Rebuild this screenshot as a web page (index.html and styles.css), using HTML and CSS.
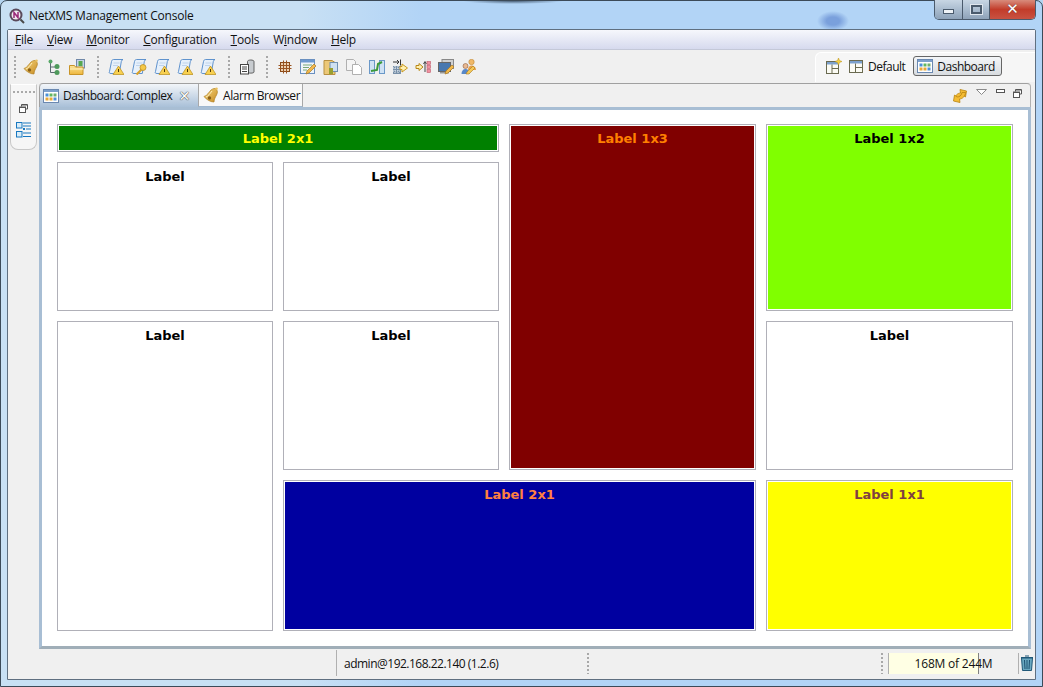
FILE: index.html
```html
<!DOCTYPE html>
<html lang="en">
<head>
<meta charset="utf-8">
<title>NetXMS Management Console</title>
<link rel="stylesheet" href="styles.css">
</head>
<body>
<svg class="defs" width="0" height="0" aria-hidden="true">
  <defs>
    <linearGradient id="gold" x1="0" y1="0" x2="1" y2="1">
      <stop offset="0" stop-color="#f6d67c"/>
      <stop offset="1" stop-color="#c88c24"/>
    </linearGradient>
    <linearGradient id="folderg" x1="0" y1="0" x2="0" y2="1">
      <stop offset="0" stop-color="#fbe49a"/>
      <stop offset="1" stop-color="#eeb63c"/>
    </linearGradient>
    <symbol id="bell" viewBox="0 0 16 16">
      <path d="M1 9.500C4 9 6 5 8 3c2-1.500 4-2 5-1 2 2 1.500 4 .5 6-1 2-2.500 4-2.500 7-3 0-7.500-2-10-5.500z" fill="url(#gold)" stroke="#b08020" stroke-width=".7"/>
      <path d="M3 10C5 9.500 7 6.500 9 4" fill="none" stroke="#fff0c0" stroke-width="1"/>
      <circle cx="6.500" cy="11" r="1.700" fill="#8a6018"/>
      <circle cx="13.500" cy="1.800" r="1.300" fill="#e8c060"/>
    </symbol>
    <symbol id="tree" viewBox="0 0 16 16">
      <path d="M4.500 3v10.500H9M4.500 8H9" fill="none" stroke="#5a6a70" stroke-width="1"/>
      <circle cx="4.500" cy="2.500" r="2" fill="#58a868"/>
      <circle cx="11" cy="7.500" r="2.500" fill="#4f9a5c"/>
      <circle cx="11" cy="13.500" r="2.500" fill="#4f9a5c"/>
    </symbol>
    <symbol id="folderpic" viewBox="0 0 16 16">
      <rect x="7.500" y="0.500" width="8" height="8.500" fill="#c4d4e8" stroke="#7088a8"/>
      <rect x="9.500" y="2" width="4" height="5" fill="#58a850"/>
      <path d="M.5 6.500h5l1 1.500h7.500v7.500H.5z" fill="url(#folderg)" stroke="#c89428"/>
      <path d="M1 10h13" stroke="#fff2c0"/>
    </symbol>
    <symbol id="scroll" viewBox="0 0 16 16">
      <path d="M3 14.500C1.500 14.500.5 13.500 1.500 12.500L3.500 2.500C3.700 1.300 4.500.5 5.500.5H15c-1 .3-1.500 1-1.700 2l-2 12z" fill="#e6f0fb" stroke="#5088c8" stroke-width=".9"/>
      <path d="M5.500 4h6M5 6.500h5" stroke="#b4cce8" stroke-width=".8"/>
      <path d="M10.500 7l5.500 8.500H5z" fill="#f8d050" stroke="#b88c18" stroke-width=".7"/>
      <path d="M10.500 10v3" stroke="#503808" stroke-width="1"/>
    </symbol>
    <symbol id="scrollkey" viewBox="0 0 16 16">
      <path d="M3 14.500C1.500 14.500.5 13.500 1.500 12.500L3.500 2.500C3.700 1.300 4.500.5 5.500.5H15c-1 .3-1.500 1-1.700 2l-2 12z" fill="#e6f0fb" stroke="#5088c8" stroke-width=".9"/>
      <path d="M5.500 4h6M5 6.500h5" stroke="#b4cce8" stroke-width=".8"/>
      <path d="M5.500 15.500l5.500-5.500" stroke="#d8a028" stroke-width="2.200"/>
      <circle cx="12" cy="8.500" r="3" fill="#f4c848" stroke="#b88818" stroke-width=".7"/>
    </symbol>
    <symbol id="server" viewBox="0 0 16 16">
      <path d="M8.500 2.500c0-2 6.500-2 6.500 0V13c0 1.500-6.500 1.500-6.500 0z" fill="#c8ccd0" stroke="#555" stroke-width=".9"/>
      <rect x="1.500" y="5.500" width="8" height="9.500" fill="#fff" stroke="#444"/>
      <path d="M3 8h5M3 10h5M3 12.500h5" stroke="#444"/>
    </symbol>
    <symbol id="gridicon" viewBox="0 0 16 16">
      <rect x="3.500" y="3.500" width="9" height="9" fill="#ecd0b0" stroke="#8a4a18"/>
      <path d="M6.500 1.500v13M9.500 1.500v13M1.500 6.500h13M1.500 9.500h13" stroke="#9a5420" stroke-width="1"/>
    </symbol>
    <symbol id="editor" viewBox="0 0 16 16">
      <rect x=".5" y=".5" width="14" height="14" fill="#eef4fb" stroke="#6a90c0"/>
      <path d="M1 1h13v2.500H1z" fill="#6a98d0"/>
      <path d="M3 6h9M3 8.500h6M3 11h4" stroke="#78a878"/>
      <path d="M6 15l1-3 7-7 2 2-7 7z" fill="#f2b84c" stroke="#a87820" stroke-width=".7"/>
    </symbol>
    <symbol id="folderdoc" viewBox="0 0 16 16">
      <path d="M1 1.500h8l3 2v12H1z" fill="#ecc878" stroke="#b89040"/>
      <rect x="7" y="3.500" width="7.500" height="9" fill="#cfe0f0" stroke="#7090b0"/>
      <rect x="6" y="9" width="4" height="6" fill="#98a030"/>
    </symbol>
    <symbol id="copy" viewBox="0 0 16 16">
      <path d="M.5.500h7l2 2v9h-9z" fill="#f4f4f4" stroke="#b0b0b0"/>
      <path d="M6.500 5.500h6l3 3v7h-9z" fill="#fff" stroke="#b0b0b0"/>
    </symbol>
    <symbol id="chart" viewBox="0 0 16 16">
      <rect x=".5" y="1.500" width="5" height="13" fill="#cfe2f4" stroke="#6a98c8"/>
      <rect x="10.500" y="1.500" width="5" height="13" fill="#cfe2f4" stroke="#6a98c8"/>
      <path d="M2 12l6-1 1-6 4-2" fill="none" stroke="#3c9a3c" stroke-width="2"/>
    </symbol>
    <symbol id="transfer" viewBox="0 0 16 16">
      <path d="M1 3h6M5 1l2 2-2 2" fill="none" stroke="#333"/>
      <path d="M8.500 .5v6" stroke="#333"/>
      <rect x="1" y="7" width="8" height="8" fill="#7890a8"/>
      <path d="M1 9h8M1 12h8M3 7v8M6 7v8" stroke="#e8eef4" stroke-dasharray="1 1"/>
      <path d="M10 5l5.500 4-5.500 4v-2.500H8v-3h2z" fill="#fff0b0" stroke="#c89820"/>
    </symbol>
    <symbol id="flow" viewBox="0 0 16 16">
      <path d="M1 6.500h3v-2l4 3.500-4 3.500v-2H1z" fill="#fff0b0" stroke="#b88818"/>
      <path d="M10 13V3M8.500 5L10 2.500 11.500 5" fill="none" stroke="#444"/>
      <rect x="12" y="2.500" width="3.500" height="3" fill="#f090a0" stroke="#c05868" stroke-width=".6"/>
      <rect x="12" y="6.500" width="3.500" height="3" fill="#f090a0" stroke="#c05868" stroke-width=".6"/>
      <rect x="12" y="10.500" width="3.500" height="3" fill="#f090a0" stroke="#c05868" stroke-width=".6"/>
    </symbol>
    <symbol id="screens" viewBox="0 0 16 16">
      <rect x="4" y=".5" width="11.500" height="9" fill="#d0d0d0" stroke="#888"/>
      <rect x=".5" y="3.500" width="12" height="9" fill="#4878b0" stroke="#666"/>
      <rect x="2" y="13" width="9" height="1.500" fill="#999"/>
      <path d="M7 15l1-3 6-6 2 2-6 6z" fill="#f2b84c" stroke="#a87820" stroke-width=".7"/>
    </symbol>
    <symbol id="users" viewBox="0 0 16 16">
      <circle cx="10.500" cy="3" r="2.700" fill="#f0b868" stroke="#c08838" stroke-width=".6"/>
      <path d="M7 11c0-3 1.500-4.500 3.500-4.500S15 8 15 11z" fill="#e8a048"/>
      <circle cx="4.500" cy="7" r="2.500" fill="#e8b890" stroke="#906040" stroke-width=".6"/>
      <path d="M.5 15c0-3 1.500-5 4-5s4 2 4 5z" fill="#5888c8"/>
      <path d="M5 15l1-2 6-6 2 2-6 6z" fill="#f4c858" stroke="#a87820" stroke-width=".6"/>
    </symbol>
    <symbol id="dash" viewBox="0 0 16 16">
      <rect x=".5" y="1.500" width="15" height="13" fill="#fff" stroke="#6a88b0"/>
      <path d="M1 2h14v2H1z" fill="#7ca0cc"/>
      <rect x="2.500" y="5.500" width="3" height="3" fill="#4a90d8"/>
      <rect x="6.500" y="5.500" width="3" height="3" fill="#60b860"/>
      <rect x="10.500" y="5.500" width="3" height="3" fill="#70b070"/>
      <rect x="2.500" y="9.500" width="3" height="3" fill="#e8a838"/>
      <rect x="6.500" y="9.500" width="3" height="3" fill="#e8a838"/>
      <rect x="10.500" y="9.500" width="3" height="3" fill="#5090d8"/>
    </symbol>
    <symbol id="layout" viewBox="0 0 16 16">
      <rect x="1.500" y="2.500" width="13" height="12" fill="#fbfbf4" stroke="#6a6a50"/>
      <path d="M2 3h12v2.500H2z" fill="#7ca0cc"/>
      <path d="M7.500 5.500v9M7.500 9.500h7" stroke="#6a6a50"/>
    </symbol>
    <symbol id="layoutnew" viewBox="0 0 16 16">
      <rect x=".5" y="3.500" width="12" height="12" fill="#fbfbf4" stroke="#6a6a50"/>
      <path d="M1 4h11v2.500H1z" fill="#7ca0cc"/>
      <path d="M6 6.500v9M6 10.500h6" stroke="#6a6a50"/>
      <path d="M12.500 0l1 2.500 2.500 1-2.500 1-1 2.500-1-2.500-2.500-1 2.500-1z" fill="#f4d040" stroke="#b89018" stroke-width=".5"/>
    </symbol>
    <symbol id="sync" viewBox="0 0 16 16">
      <path d="M2.500 11.500C2.500 8 5.500 5 8.500 5L8 1.500 14.500 3 13.500 9 11 7C8.500 7 6.500 8.500 6 11.500z" fill="#f4bc34" stroke="#b88410" stroke-width=".8"/>
      <path d="M13.500 4.500C13.500 8 10.500 11 7.500 11L8 14.500 1.500 13 2.500 7 5 9C7.500 9 9.500 7.500 10 4.500z" fill="#f4bc34" stroke="#b88410" stroke-width=".8"/>
    </symbol>
    <symbol id="restore" viewBox="0 0 9 9">
      <path d="M2.500 2.500V.5h6v4.500h-2" fill="#fff" stroke="#555"/>
      <rect x=".5" y="3" width="6" height="5.500" fill="#fff" stroke="#555"/>
      <path d="M1 3.500h5M3 1h5" stroke="#555"/>
    </symbol>
    <symbol id="tri" viewBox="0 0 11 6">
      <path d="M.5.500h10L5.500 5.500z" fill="#fff" stroke="#8a8a8a"/>
    </symbol>
    <symbol id="outline" viewBox="0 0 16 16">
      <rect x=".5" y=".5" width="5.500" height="5.500" fill="#d8ecf8" stroke="#1878c0"/>
      <rect x=".5" y="9.500" width="5.500" height="5.500" fill="#d8ecf8" stroke="#1878c0"/>
      <path d="M7 1h8M7 4h8M10 7h5M7 11h8" stroke="#1878c0" stroke-width="1"/>
      <rect x="7" y="6" width="2" height="2" fill="#1878c0"/>
      <path d="M7 14.500h8" stroke="#1878c0"/>
    </symbol>
    <symbol id="appicon" viewBox="0 0 16 16">
      <circle cx="7" cy="7" r="6.500" fill="#5a4a5c"/>
      <circle cx="7" cy="7" r="4.500" fill="#f0e8f0"/>
      <path d="M5 10V4.500l4 5V4" fill="none" stroke="#9a2878" stroke-width="1.500"/>
      <path d="M11.500 11.500L15 15" stroke="#4a4a4a" stroke-width="2"/>
    </symbol>
    <symbol id="trash" viewBox="0 0 14 16">
      <path d="M1.500 3h11L11.500 15.500h-9z" fill="#6aa8c0" stroke="#205878"/>
      <path d="M1 2.500h12M5 1h4" stroke="#205878" stroke-width="1.200"/>
      <path d="M4.500 5l.5 9M7 5v9M9.500 5l-.5 9" stroke="#1c5070"/>
    </symbol>
  </defs>
</svg>

<div class="window">
  <header class="titlebar">
    <svg class="app-icon"><use href="#appicon"/></svg>
    <span class="title-text">NetXMS Management Console</span>
    <div class="controls">
      <span class="ctl ctl-min"><i></i></span>
      <span class="ctl ctl-max"><i></i></span>
      <span class="ctl ctl-close">✕</span>
    </div>
  </header>

  <div class="client">
    <nav class="menubar">
      <span><u>F</u>ile</span>
      <span><u>V</u>iew</span>
      <span><u>M</u>onitor</span>
      <span><u>C</u>onfiguration</span>
      <span><u>T</u>ools</span>
      <span>W<u>i</u>ndow</span>
      <span><u>H</u>elp</span>
    </nav>

    <div class="toolbar">
      <div class="tools">
        <i class="grip"></i>
        <div class="tool-group tg-first">
          <svg class="ti"><use href="#bell"/></svg>
          <svg class="ti"><use href="#tree"/></svg>
          <svg class="ti"><use href="#folderpic"/></svg>
        </div>
        <i class="grip"></i>
        <div class="tool-group">
          <svg class="ti"><use href="#scroll"/></svg>
          <svg class="ti"><use href="#scrollkey"/></svg>
          <svg class="ti"><use href="#scroll"/></svg>
          <svg class="ti"><use href="#scroll"/></svg>
          <svg class="ti"><use href="#scroll"/></svg>
        </div>
        <i class="grip"></i>
        <div class="tool-group tg-short">
          <svg class="ti"><use href="#server"/></svg>
        </div>
        <i class="grip"></i>
        <div class="tool-group">
          <svg class="ti"><use href="#gridicon"/></svg>
          <svg class="ti"><use href="#editor"/></svg>
          <svg class="ti"><use href="#folderdoc"/></svg>
          <svg class="ti"><use href="#copy"/></svg>
          <svg class="ti"><use href="#chart"/></svg>
          <svg class="ti"><use href="#transfer"/></svg>
          <svg class="ti"><use href="#flow"/></svg>
          <svg class="ti"><use href="#screens"/></svg>
          <svg class="ti"><use href="#users"/></svg>
        </div>
      </div>
      <div class="perspectives">
        <svg class="ti"><use href="#layoutnew"/></svg>
        <span class="persp">
          <svg class="ti"><use href="#layout"/></svg>Default
        </span>
        <span class="persp persp-active">
          <svg class="ti"><use href="#dash"/></svg>Dashboard
        </span>
      </div>
    </div>

    <main class="workbench">
      <aside class="trim">
        <i class="trim-grip"></i>
        <svg class="restore"><use href="#restore"/></svg>
        <svg class="outline"><use href="#outline"/></svg>
      </aside>

      <section class="folder">
        <div class="tabs">
          <div class="tab tab-active">
            <svg class="ti"><use href="#dash"/></svg>
            <span class="tab-label">Dashboard: Complex</span>
            <span class="tab-close">✕</span>
          </div>
          <div class="tab tab-other">
            <svg class="ti"><use href="#bell"/></svg>
            <span class="tab-label">Alarm Browser</span>
          </div>
          <div class="view-actions">
            <svg class="ti"><use href="#sync"/></svg>
            <svg class="menu-tri"><use href="#tri"/></svg>
            <i class="min-btn"></i>
            <svg class="restore"><use href="#restore"/></svg>
          </div>
        </div>

        <div class="dashboard">
          <div class="card c-span2 green"><b>Label 2x1</b></div>
          <div class="card c-tall maroon"><b>Label 1x3</b></div>
          <div class="card c-row2 lime"><b>Label 1x2</b></div>
          <div class="card"><b>Label</b></div>
          <div class="card"><b>Label</b></div>
          <div class="card c-row2"><b>Label</b></div>
          <div class="card"><b>Label</b></div>
          <div class="card"><b>Label</b></div>
          <div class="card c-span2 navy"><b>Label 2x1</b></div>
          <div class="card yellow"><b>Label 1x1</b></div>
        </div>
      </section>
    </main>

    <footer class="statusbar">
      <div class="st-user">admin@192.168.22.140 (1.2.6)</div>
      <i class="grip st-grip"></i>
      <div class="heap">
        <i class="grip heap-grip"></i>
        <div class="heap-bar"><span>168M of 244M</span></div>
        <svg class="trash"><use href="#trash"/></svg>
      </div>
    </footer>
  </div>
</div>
</body>
</html>
```

FILE: styles.css
```css
* { box-sizing: border-box; }

html, body {
  margin: 0;
  height: 100%;
  overflow: hidden;
}

body {
  font-family: "Open Sans", "Noto Sans", "Liberation Sans", sans-serif;
  font-size: 12px;
  letter-spacing: -0.2px;
  color: #111;
  background: #b4d4f0;
}

.defs { position: absolute; }

.window {
  height: 687px;
  display: flex;
  flex-direction: column;
  border: 1px solid #3c4a58;
  border-radius: 7px 7px 0 0;
  padding: 0 6px 6px;
  background:
    radial-gradient(ellipse 16px 10px at 832px 20px, #7aa0dc 0, #7aa0dc 40%, transparent 100%),
    radial-gradient(ellipse 50px 3px at 512px 0, #4a6078 0, transparent 100%),
    linear-gradient(90deg, #c8e0f4 0, #c8e0f4 300px, #b2d4f6 420px, #b2d4f6 100%);
}

/* title bar */
.titlebar {
  height: 28px;
  flex: none;
  display: flex;
  align-items: center;
  position: relative;
}
.app-icon { width: 16px; height: 16px; margin: 2px 4px 0 2px; }
.title-text { font-size: 12px; color: #101010; margin-top: 1px; }

.controls {
  position: absolute;
  top: -1px;
  right: 0;
  display: flex;
  height: 20px;
  width: 102px;
  border: 1px solid #4a5a6c;
  border-top: 0;
  border-radius: 0 0 5px 5px;
  overflow: hidden;
}
.ctl { display: flex; align-items: center; justify-content: center; }
.ctl-min, .ctl-max {
  background: linear-gradient(#c8d6e4, #aabccf 50%, #8ea2b8);
  border-right: 1px solid #4a5a6c;
}
.ctl-min { width: 28px; }
.ctl-max { width: 27px; }
.ctl-min i { width: 11px; height: 5px; margin-top: 4px; background: #eef2f6; border: 1px solid #4a5a6c; }
.ctl-max i { width: 11px; height: 9px; background: transparent; border: 2px solid #4a5a6c; outline: 1px solid #dfe6ee; }
.ctl-close {
  flex: 1;
  background: linear-gradient(#d88c7c, #c23c2a 50%, #c85242);
  color: #fff;
  font: bold 15px/1 "DejaVu Sans", sans-serif;
  letter-spacing: 0;
  text-shadow: 0 0 1px #3a2a2a;
}

/* client area */
.client {
  flex: 1;
  min-height: 0;
  display: flex;
  flex-direction: column;
  background: #f0f0f0;
  border: 1px solid #5f6f80;
  border-radius: 2px 2px 0 0;
}

.menubar {
  height: 20px;
  flex: none;
  display: flex;
  align-items: center;
  padding-left: 7px;
  gap: 14px;
  letter-spacing: -0.25px;
  background: linear-gradient(#f6f7fc, #d6daee);
  border-bottom: 1px solid #c4c8d8;
}

.toolbar {
  height: 33px;
  flex: none;
  display: flex;
  align-items: center;
  justify-content: space-between;
}
.tools { display: flex; align-items: center; padding-left: 6px; }
.tool-group { display: flex; gap: 7px; padding: 0 12px 0 9px; }
.tg-first { padding-left: 7px; }
.tg-short { padding-right: 11px; }
.ti { width: 16px; height: 16px; flex: none; display: block; }

.grip {
  display: block;
  width: 2px;
  height: 22px;
  flex: none;
  background: repeating-linear-gradient(#a8a8a8 0 2px, transparent 2px 4px);
}

.perspectives {
  display: flex;
  align-items: center;
  height: 30px;
  width: 220px;
  padding: 0 0 2px 10px;
  gap: 6px;
  letter-spacing: -0.5px;
  background: #f6f6f6;
  border: 1px solid #fff;
  border-right: 0;
  border-bottom: 0;
  border-radius: 6px 0 0 0;
}
.persp { display: flex; align-items: center; gap: 4px; height: 20px; }
.persp-active {
  margin-left: 2px;
  padding: 0 6px 0 3px;
  border: 1px solid #666;
  border-radius: 3px;
  background: linear-gradient(#f4f6f8, #d8dce0);
}

/* workbench */
.workbench {
  flex: 1;
  min-height: 0;
  display: flex;
  align-items: flex-start;
  padding: 0 4px 0 2px;
}

.trim {
  width: 27px;
  height: 66px;
  margin-top: 1px;
  flex: none;
  display: flex;
  flex-direction: column;
  align-items: center;
  border: 1px solid #c8c8c8;
  border-top-color: #fff;
  border-radius: 0 0 8px 8px;
  background: #f6f6f6;
}
.trim-grip {
  width: 22px;
  height: 2px;
  margin-top: 6px;
  background: repeating-linear-gradient(90deg, #aaa 0 2px, transparent 2px 4px);
}
.restore { width: 9px; height: 9px; display: block; flex: none; }
.trim .restore { margin-top: 11px; }
.outline { width: 16px; height: 16px; margin-top: 9px; }

.folder {
  flex: 1;
  height: 566px;
  margin-left: 2px;
  display: flex;
  flex-direction: column;
}

.tabs {
  height: 24px;
  flex: none;
  display: flex;
  align-items: stretch;
  background: #f0f0f0;
  border-top: 1px solid #a0a0a0;
  border-right: 1px solid #b0b0b0;
  border-radius: 4px 4px 0 0;
}
.tab { display: flex; align-items: center; gap: 4px; flex: none; }
.tab-label { white-space: nowrap; letter-spacing: -0.45px; }
.tab-active {
  width: 159px;
  padding-left: 3px;
  border-left: 1px solid #a0a0a0;
  border-radius: 4px 0 0 0;
  background: linear-gradient(#f2f5f9, #a9c0d8);
}
.tab-close { margin-left: 2px; font: bold 14px/1 "DejaVu Sans", sans-serif; letter-spacing: 0; color: #fff; text-shadow: 0 0 1px #333, 0 0 1px #333; }
.tab-other {
  width: 105px;
  padding-left: 4px;
  background: #f8f8f8;
  border-left: 1px solid #a8a8a8;
  border-right: 1px solid #a8a8a8;
  border-bottom: 1px solid #a0b8d0;
}
.view-actions {
  margin-left: auto;
  display: flex;
  align-items: flex-start;
  padding: 4px 8px 0 0;
}
.menu-tri { width: 11px; height: 6px; margin: 1px 0 0 8px; }
.min-btn {
  width: 9px;
  height: 4px;
  margin: 1px 8px 0 9px;
  border: 1px solid #555;
  background: #fff;
}
.view-actions .restore { margin-top: 1px; }

.dashboard {
  flex: 1;
  min-height: 0;
  display: grid;
  grid-template-columns: 216px 216px 247px 247px;
  grid-template-rows: 28px 149px 149px 151px;
  gap: 10px;
  padding: 14px 15px;
  background: #fff;
  border: 3px solid #a8bed4;
  border-bottom-color: #a0aeb8;
  align-content: start;
}

.card {
  border: 1px solid #b0b0b8;
  background: #fff;
  text-align: center;
  font: 13px/1 "DejaVu Sans", Verdana, sans-serif;
  letter-spacing: 0;
  color: #000;
  padding-top: 7px;
  box-shadow: inset 0 0 0 1px #fff;
}
.card b { font-weight: bold; }
.c-span2 { grid-column: span 2; }
.c-tall { grid-row: span 3; }
.c-row2 { grid-row: span 2; }

.green  { background: #008000; color: #ffff00; }
.maroon { background: #800000; color: #ff8000; }
.lime   { background: #80ff00; color: #000; }
.navy   { background: #0000a0; color: #ff8040; }
.yellow { background: #ffff00; color: #804040; }

/* status bar */
.statusbar {
  height: 32px;
  flex: none;
  display: flex;
  align-items: center;
}
.st-user {
  margin-left: 328px;
  width: 251px;
  height: 26px;
  display: flex;
  align-items: center;
  padding-left: 7px;
  letter-spacing: -0.5px;
  border-left: 1px solid #b0b0b0;
}
.st-grip { height: 21px; }
.heap { margin-left: auto; display: flex; align-items: center; height: 21px; padding-right: 1px; }
.heap-grip { height: 21px; margin-right: 5px; }
.heap-bar {
  width: 131px;
  height: 21px;
  display: flex;
  align-items: center;
  justify-content: center;
  border-left: 1px solid #b0b0b0;
  border-right: 1px solid #b0b0b0;
  background: linear-gradient(90deg, #ffffe4 0 69%, #808080 69% 69.8%, #f0f0f0 69.8%);
}
.trash { width: 14px; height: 16px; margin-left: 1px; }
```
